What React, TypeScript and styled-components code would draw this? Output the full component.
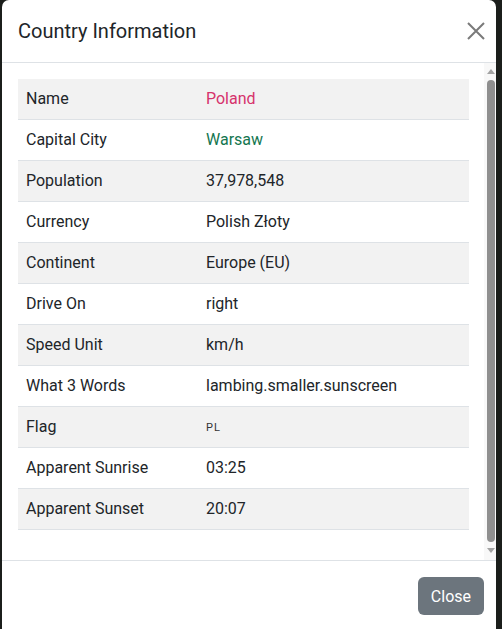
import React from 'react';
import styled, { createGlobalStyle } from 'styled-components';

const GlobalStyle = createGlobalStyle`
  html, body {
    margin: 0;
    padding: 0;
    height: 100%;
    overflow: hidden;
    background: #1b1e1b;
  }
  body {
    font-family: Roboto, "Liberation Sans", sans-serif;
    color: #212529;
  }
`;

// Layout
const Backdrop = styled.div`
  display: flex;
  height: 629px;
  padding-left: 2px;
`;

const Dialog = styled.div`
  width: 494px;
  height: 640px;
  background: #fff;
  border-radius: 7px;
  display: flex;
  flex-direction: column;
  overflow: hidden;
`;

const Header = styled.div`
  display: flex;
  align-items: center;
  justify-content: space-between;
  padding: 16px 11px 16px 16px;
  border-bottom: 1px solid #dee2e6;
`;

const Title = styled.h5`
  margin: 0;
  font-size: 20px;
  font-weight: 400;
  line-height: 30px;
`;

const CloseX = styled.button`
  width: 18px;
  height: 18px;
  padding: 0;
  border: 0;
  background: transparent;
  color: #7a7a7a;
  display: flex;
  cursor: pointer;
`;

const Body = styled.div`
  height: 497px;
  display: flex;
`;

const Scroller = styled.div`
  flex: 1;
  overflow: hidden;
  padding: 16px 15px 16px 16px;
`;

// drawn scrollbar (headless browser hides native ones)
const Rail = styled.div`
  width: 12px;
  background: #f8f8f8;
  display: flex;
  flex-direction: column;
  align-items: center;
  padding: 6px 0 7px;
  gap: 6px;
`;

const Arrow = styled.div<{ $down?: boolean }>`
  width: 0;
  height: 0;
  border-left: 4px solid transparent;
  border-right: 4px solid transparent;
  ${(p) => (p.$down ? 'border-top: 5px solid #a3a3a3;' : 'border-bottom: 5px solid #a3a3a3;')}
  margin-left: 1px;
`;

const Thumb = styled.div`
  flex: 1;
  width: 8px;
  margin-left: 1px;
  border-radius: 4px;
  background: #8f8f8f;
`;

const Table = styled.table`
  width: 100%;
  border-collapse: collapse;
  margin-bottom: 16px;
  font-size: 16px;
  line-height: 24px;
`;

const Row = styled.tr<{ $striped: boolean }>`
  background: ${(p) => (p.$striped ? '#f2f2f2' : '#fff')};
  border-bottom: 1px solid #dee2e6;
`;

const Label = styled.td`
  width: 164px;
  padding: 8px;
`;

const Value = styled.td<{ $tone?: string }>`
  padding: 8px;
  color: ${(p) => p.$tone || '#212529'};
`;

const FlagCode = styled.span`
  display: inline-block;
  font-size: 11px;
  line-height: 11px;
  letter-spacing: 1px;
  vertical-align: middle;
  color: #333;
`;

const Footer = styled.div`
  display: flex;
  justify-content: flex-end;
  padding: 16px 12px 12px;
  border-top: 1px solid #dee2e6;
`;

const Button = styled.button`
  height: 38px;
  padding: 0 13px;
  border: 0;
  border-radius: 6px;
  background: #6c757d;
  color: #fff;
  font-family: Roboto, "Liberation Sans", sans-serif;
  font-size: 16px;
  cursor: pointer;
`;

interface Info {
  label: string;
  value: React.ReactNode;
  tone?: string;
}

const rows: Info[] = [
  { label: 'Name', value: 'Poland', tone: '#d6336c' },
  { label: 'Capital City', value: 'Warsaw', tone: '#147650' },
  { label: 'Population', value: '37,978,548' },
  { label: 'Currency', value: 'Polish Złoty' },
  { label: 'Continent', value: 'Europe (EU)' },
  { label: 'Drive On', value: 'right' },
  { label: 'Speed Unit', value: 'km/h' },
  { label: 'What 3 Words', value: 'lambing.smaller.sunscreen' },
  { label: 'Flag', value: <FlagCode>PL</FlagCode> },
  { label: 'Apparent Sunrise', value: '03:25' },
  { label: 'Apparent Sunset', value: '20:07' },
];

const App: React.FC = () => {
  return (
    <>
      <GlobalStyle />
      <Backdrop>
        <Dialog>
          <Header>
            <Title>Country Information</Title>
            <CloseX aria-label="Close">
              <svg width="18" height="18" viewBox="0 0 18 18">
                <path d="M1 1L17 17M17 1L1 17" stroke="currentColor" strokeWidth="2" />
              </svg>
            </CloseX>
          </Header>
          <Body>
            <Scroller>
              <Table>
                <tbody>
                  {rows.map((r, i) => (
                    <Row key={r.label} $striped={i % 2 === 0}>
                      <Label>{r.label}</Label>
                      <Value $tone={r.tone}>{r.value}</Value>
                    </Row>
                  ))}
                </tbody>
              </Table>
            </Scroller>
            <Rail>
              <Arrow />
              <Thumb />
              <Arrow $down />
            </Rail>
          </Body>
          <Footer>
            <Button>Close</Button>
          </Footer>
        </Dialog>
      </Backdrop>
    </>
  );
};

export default App;
